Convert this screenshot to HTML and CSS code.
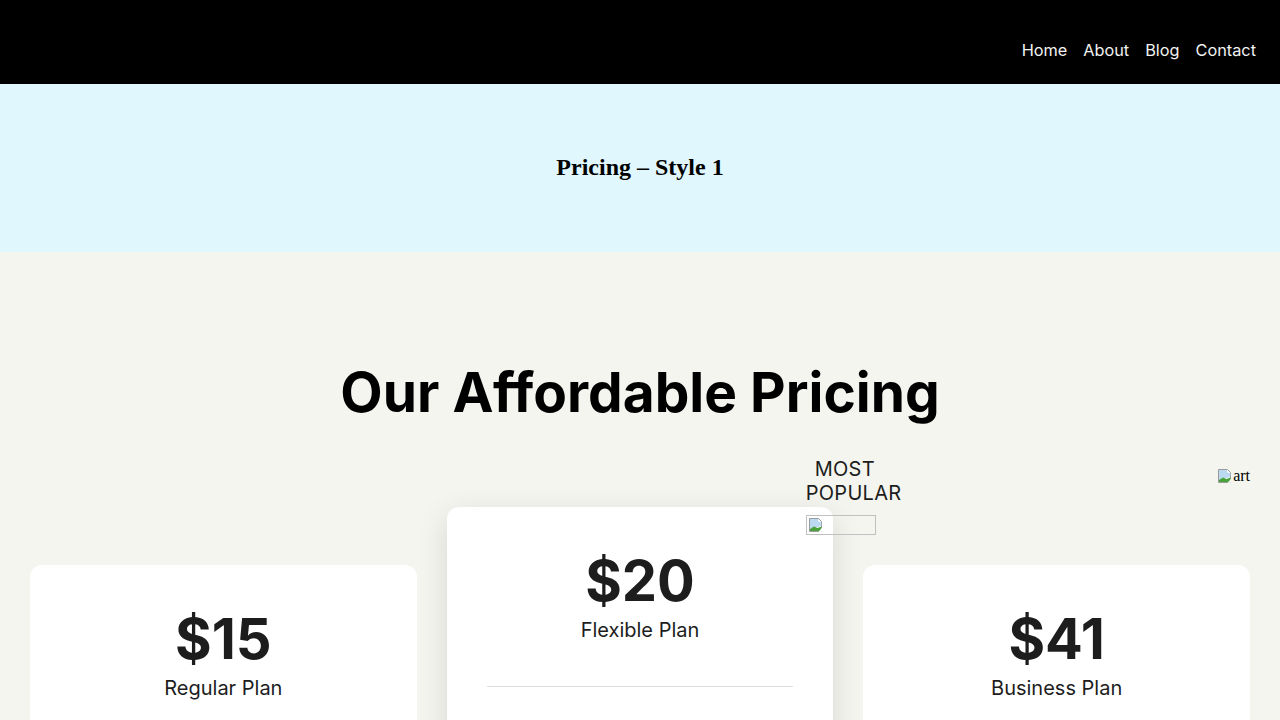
FILE: index.html
```html
<!DOCTYPE html>
<html lang="en">
<head>
    <meta charset="UTF-8">
    <meta name="viewport" content="width=device-width, initial-scale=1.0">
    <title>Pricing - Style 1</title>
    <link rel="stylesheet" href="styles.css">
</head>
<body>

    <header class="site-header">
        <nav class="main-nav">
            <a href="#">Home</a>
            <a href="#">About</a>
            <a href="#">Blog</a>
            <a href="#">Contact</a>
        </nav>
    </header>

    <section class="page-hero">
        <h1>Pricing &ndash; Style 1</h1>
    </section>

    <section class="pricing">
        <span class="art broken-img">
            <svg class="broken-icon" width="16" height="16" viewBox="0 0 16 16">
                <path d="M1.5 1.5h9l3 3v10h-12z" fill="#fff" stroke="#9a9a9a"/>
                <path d="M2 2h8.3v2.8h3V9L2 12z" fill="#bcd9f2"/>
                <path d="M2 14h11.5v-4.5l-4 1.5L6 9.5L2 12z" fill="#4aa23a"/>
                <path d="M11 16l5-6" stroke="#f3f5ee" stroke-width="2"/>
            </svg>art
        </span>

        <h2 class="pricing-title">Our Affordable Pricing</h2>

        <div class="plans">
            <div class="plan">
                <div class="price">$15</div>
                <div class="plan-name">Regular Plan</div>
            </div>

            <div class="plan plan-featured">
                <div class="badge">
                    <span class="badge-text"><span class="badge-first">MOST</span><br>POPULAR</span>
                    <span class="badge-img">
                        <svg class="broken-icon" width="16" height="16" viewBox="0 0 16 16">
                            <path d="M1.5 1.5h9l3 3v10h-12z" fill="#fff" stroke="#9a9a9a"/>
                            <path d="M2 2h8.3v2.8h3V9L2 12z" fill="#bcd9f2"/>
                            <path d="M2 14h11.5v-4.5l-4 1.5L6 9.5L2 12z" fill="#4aa23a"/>
                            <path d="M11 16l5-6" stroke="#fff" stroke-width="2"/>
                        </svg>
                    </span>
                </div>
                <div class="price">$20</div>
                <div class="plan-name">Flexible Plan</div>
                <hr class="plan-rule">
            </div>

            <div class="plan">
                <div class="price">$41</div>
                <div class="plan-name">Business Plan</div>
            </div>
        </div>
    </section>

</body>
</html>
```

FILE: styles.css
```css
body {
    margin: 0;
    font-family: Inter, "Noto Sans", sans-serif;
    background-color: #f3f5ee;
    color: #1d1d1d;
}

.site-header {
    background-color: #000;
    height: 84px;
    display: flex;
    justify-content: flex-end;
    align-items: flex-end;
    padding: 0 24px;
}

.main-nav {
    display: flex;
    gap: 16px;
    padding-bottom: 24px;
}

.main-nav a {
    color: #f2f2f2;
    text-decoration: none;
    font-size: 16.3px;
}

.page-hero {
    background-color: #e0f7fd;
    height: 168px;
    display: flex;
    align-items: center;
    justify-content: center;
}

.page-hero h1 {
    margin: 0 0 2px;
    font-family: "Liberation Serif", serif;
    font-size: 24px;
    color: #000;
}

.pricing {
    position: relative;
    padding: 107px 30px 0;
}

.pricing-title {
    margin: 0 0 82px;
    text-align: center;
    font-size: 55px;
    font-weight: 700;
    line-height: 1.2;
    color: #000;
}

/* broken images, drawn as the browser shows them */
.broken-img {
    font-family: "Liberation Serif", serif;
    font-size: 16px;
    color: #000;
    display: flex;
    align-items: center;
}

.art {
    position: absolute;
    top: 215px;
    right: 30px;
}

.plans {
    display: grid;
    grid-template-columns: repeat(3, 1fr);
    gap: 30px;
    align-items: start;
}

.plan {
    background: #fff;
    border-radius: 12px;
    padding: 40px 40px 60px;
    text-align: center;
    margin-top: 58px;
    min-height: 200px;
}

.plan-featured {
    position: relative;
    margin-top: 0;
    box-shadow: 0 8px 30px rgba(0, 0, 0, 0.12);
}

.price {
    font-size: 56px;
    font-weight: 700;
    color: #1d1d1d;
}

.plan-name {
    font-size: 20px;
    margin-top: 3px;
}

.plan-rule {
    border: none;
    border-top: 1px solid #dedede;
    margin: 44px 0 0;
}

.badge {
    position: absolute;
    top: -50px;
    left: 359px;
    text-align: left;
}

.badge-text {
    display: block;
    font-size: 20px;
    line-height: 24px;
    letter-spacing: 0.3px;
}

.badge-first {
    padding-left: 9px;
}

.badge-img {
    display: flex;
    width: 67px;
    height: 18px;
    margin-top: 10px;
    border: 1px solid #c0c0c0;
    align-items: center;
    padding-left: 1px;
}
```
